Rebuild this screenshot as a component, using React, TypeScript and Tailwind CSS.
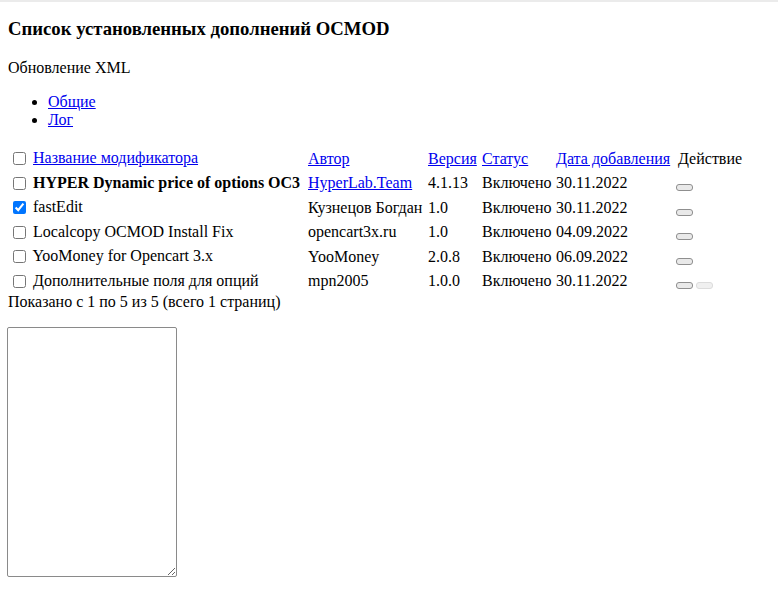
import React from "react";

const rows = [
  { name: "HYPER Dynamic price of options OC3", bold: true, author: "HyperLab.Team", authorLink: true, ver: "4.1.13", date: "30.11.2022", checked: false, two: false },
  { name: "fastEdit", author: "Кузнецов Богдан", ver: "1.0", date: "30.11.2022", checked: true },
  { name: "Localcopy OCMOD Install Fix", author: "opencart3x.ru", ver: "1.0", date: "04.09.2022", checked: false },
  { name: "YooMoney for Opencart 3.x", author: "YooMoney", ver: "2.0.8", date: "06.09.2022", checked: false },
  { name: "Дополнительные поля для опций", author: "mpn2005", ver: "1.0.0", date: "30.11.2022", checked: false, two: true },
];

const Btn = ({ disabled }: { disabled?: boolean }) => (
  <span
    className={
      disabled
        ? "inline-block w-[17px] h-[7px] rounded-[3px] border border-[#dcdcdc] bg-[#f0f0f0] align-[-3px] ml-[3px]"
        : "inline-block w-[17px] h-[7px] rounded-[3px] border border-[#8f8f8f] bg-[#e9e9e9] align-[-3px] -ml-[2px]"
    }
  />
);

const cb = "m-[3px_3px_3px_4px] w-[13px] h-[13px] align-[-2px] accent-[#0075ff]";
const td = "px-[1px] py-[1.75px] text-left align-middle whitespace-nowrap";
const link = "text-[#0000ee] underline";

export default function App() {
  return (
    <div className="min-h-[590px] bg-white text-black text-[16px] leading-[1.15]" style={{ fontFamily: '"Liberation Serif", "Times New Roman", serif' }}>
      <div className="h-[2px] bg-[#ebebeb]" />
      <div className="px-[8px]">
        <h3 className="font-bold text-[18.72px] mt-[16px] mb-[19px]">Список установленных дополнений OCMOD</h3>
        <p className="mb-[16px]">Обновление XML</p>
        <ul className="list-disc pl-[40px] mb-[16px]">
          <li><a href="#" className={link}>Общие</a></li>
          <li><a href="#" className={link}>Лог</a></li>
        </ul>
        <table className="border-separate border-spacing-[2px] -ml-[2px]">
          <tbody>
            <tr>
              <td className={td + " w-[297px]"}><input type="checkbox" className={cb} readOnly /> <a href="#" className={link}>Название модификатора</a></td>
              <td className={td + " w-[118px]"}><a href="#" className={link}>Автор</a></td>
              <td className={td + " w-[52px]"}><a href="#" className={link}>Версия</a></td>
              <td className={td + " w-[72px]"}><a href="#" className={link}>Статус</a></td>
              <td className={td + " w-[120px]"}><a href="#" className={link}>Дата добавления</a></td>
              <td className={td}>Действие</td>
            </tr>
            {rows.map((r, i) => (
              <tr key={i}>
                <td className={td}>
                  <input type="checkbox" className={cb} defaultChecked={r.checked} />{" "}
                  {r.bold ? <b>{r.name}</b> : r.name}
                </td>
                <td className={td}>{r.authorLink ? <a href="#" className={link}>{r.author}</a> : r.author}</td>
                <td className={td}>{r.ver}</td>
                <td className={td}>Включено</td>
                <td className={td}>{r.date}</td>
                <td className={td}>
                  <Btn />
                  {r.two && <Btn disabled />}
                </td>
              </tr>
            ))}
          </tbody>
        </table>
        <div className="-mt-[2px]">Показано с 1 по 5 из 5 (всего 1 страниц)</div>
        <textarea className="mt-[16px] block w-[170px] h-[250px] border border-[#8a8a8a] rounded-[2px] bg-white -ml-[1px]" />
      </div>
    </div>
  );
}
